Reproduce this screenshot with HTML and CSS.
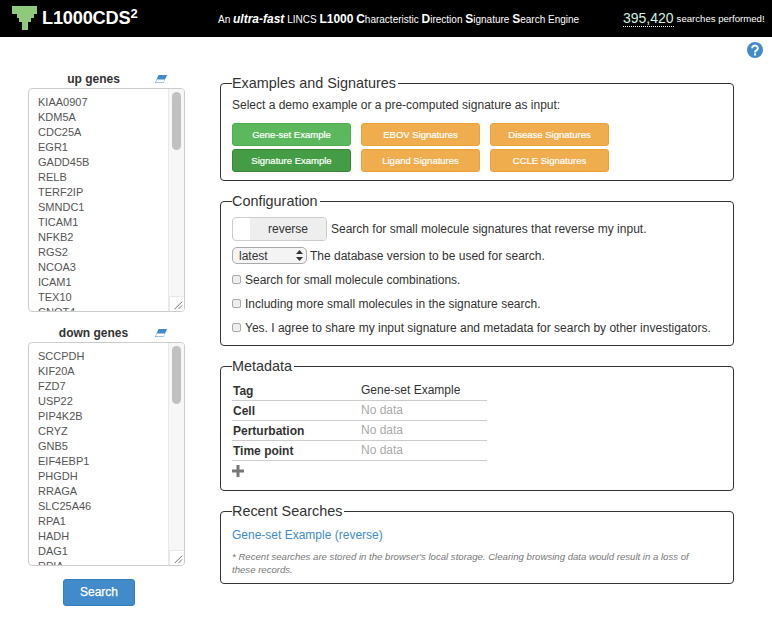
FILE: index.html
```html
<!DOCTYPE html>
<html lang="en">
<head>
<meta charset="utf-8">
<title>L1000CDS2</title>
<link rel="stylesheet" href="styles.css">
</head>
<body>
<header class="topbar">
  <svg class="logo" width="25" height="24" viewBox="0 0 25 24"><polygon points="0,0 25,0 25,8 22,8 22,12 19,12 19,16 16,16 16,24 10,24 10,16 7,16 7,12 5,12 5,8 0,8" fill="#8fc97c"/></svg>
  <div class="brand">L1000CDS<sup class="brand-sup">2</sup></div>
  <div class="tagline">An <b class="fast">ultra-fast</b> LINCS <b class="cap">L1000</b> <b class="cap">C</b>haracteristic <b class="cap">D</b>irection <b class="cap">S</b>ignature <b class="cap">S</b>earch Engine</div>
  <div class="counter"><span class="count">395,420</span> <span class="count-label">searches performed!</span></div>
</header>
<div class="helpbar">
  <svg width="16" height="16" viewBox="0 0 16 16"><circle cx="8" cy="8" r="8" fill="#428bca"/><path d="M5.200 6.200a2.800 2.600 0 1 1 4.300 2.200c-1 .6-1.500 1-1.500 2" fill="none" stroke="#fff" stroke-width="2"/><rect x="7" y="11.400" width="2.100" height="2.100" fill="#fff"/></svg>
</div>
<main class="layout">
  <aside class="genes">
    <div class="gene-head">
      <span class="gene-title">up genes</span>
      <svg class="eraser" width="12" height="8" viewBox="0 0 12 8"><path d="M3.500 0H12L8.500 8H0Z" fill="#428bca"/><path d="M1.800 4.600H9.900L8.500 7.400H.8Z" fill="#fff"/></svg>
    </div>
    <div class="gene-box">
      <div class="gene-list">KIAA0907<br>KDM5A<br>CDC25A<br>EGR1<br>GADD45B<br>RELB<br>TERF2IP<br>SMNDC1<br>TICAM1<br>NFKB2<br>RGS2<br>NCOA3<br>ICAM1<br>TEX10<br>CNOT4</div>
      <div class="scroll"><div class="thumb"></div></div>
      <svg class="grip" width="15" height="15" viewBox="0 0 15 15"><path d="M5 13 13 5M9 13l4-4" stroke="#666" fill="none"/></svg>
    </div>
    <div class="gene-head gene-head-down">
      <span class="gene-title">down genes</span>
      <svg class="eraser" width="12" height="8" viewBox="0 0 12 8"><path d="M3.500 0H12L8.500 8H0Z" fill="#428bca"/><path d="M1.800 4.600H9.900L8.500 7.400H.8Z" fill="#fff"/></svg>
    </div>
    <div class="gene-box">
      <div class="gene-list">SCCPDH<br>KIF20A<br>FZD7<br>USP22<br>PIP4K2B<br>CRYZ<br>GNB5<br>EIF4EBP1<br>PHGDH<br>RRAGA<br>SLC25A46<br>RPA1<br>HADH<br>DAG1<br>RPIA</div>
      <div class="scroll"><div class="thumb"></div></div>
      <svg class="grip" width="15" height="15" viewBox="0 0 15 15"><path d="M5 13 13 5M9 13l4-4" stroke="#666" fill="none"/></svg>
    </div>
    <button class="search-btn">Search</button>
  </aside>
  <section class="panels">
    <fieldset class="panel panel-examples">
      <legend>Examples and Signatures</legend>
      <p class="intro">Select a demo example or a pre-computed signature as input:</p>
      <div class="btn-grid">
        <button class="btn btn-green">Gene-set Example</button>
        <button class="btn btn-orange">EBOV Signatures</button>
        <button class="btn btn-orange">Disease Signatures</button>
        <button class="btn btn-green-dark">Signature Example</button>
        <button class="btn btn-orange">Ligand Signatures</button>
        <button class="btn btn-orange">CCLE Signatures</button>
      </div>
    </fieldset>
    <fieldset class="panel panel-config">
      <legend>Configuration</legend>
      <div class="row row-toggle">
        <div class="toggle"><span class="toggle-off"></span><span class="toggle-on">reverse</span></div>
        <span>Search for small molecule signatures that reverse my input.</span>
      </div>
      <div class="row row-select">
        <div class="select"><span>latest</span><svg width="7" height="11" viewBox="0 0 7 11"><path d="M3.500 0 7 4H0ZM3.500 11 0 7H7Z" fill="#333"/></svg></div>
        <span>The database version to be used for search.</span>
      </div>
      <label class="row row-check"><span class="check"></span>Search for small molecule combinations.</label>
      <label class="row row-check"><span class="check"></span>Including more small molecules in the signature search.</label>
      <label class="row row-check"><span class="check"></span>Yes. I agree to share my input signature and metadata for search by other investigators.</label>
    </fieldset>
    <fieldset class="panel panel-meta">
      <legend>Metadata</legend>
      <div class="meta-table">
        <div class="meta-row"><b>Tag</b><span class="value">Gene-set Example</span></div>
        <div class="meta-row"><b>Cell</b><span class="value muted">No data</span></div>
        <div class="meta-row"><b>Perturbation</b><span class="value muted">No data</span></div>
        <div class="meta-row"><b>Time point</b><span class="value muted">No data</span></div>
      </div>
      <svg class="plus" width="12" height="12" viewBox="0 0 12 12"><path d="M4.500 0h3v4.500h4.500v3H7.500V12h-3V7.500H0v-3h4.500Z" fill="#777"/></svg>
    </fieldset>
    <fieldset class="panel panel-recent">
      <legend>Recent Searches</legend>
      <a class="recent-link" href="#">Gene-set Example (reverse)</a>
      <p class="note">* Recent searches are stored in the browser's local storage. Clearing browsing data would result in a loss of these records.</p>
    </fieldset>
  </section>
</main>
</body>
</html>
```
FILE: styles.css
```css
* { box-sizing: border-box; }
html, body { margin: 0; padding: 0; }
body { width: 772px; height: 626px; overflow: hidden; background: #fff; color: #333; font-family: "Liberation Sans", Arial, sans-serif; font-size: 12px; }

.topbar { height: 37px; background: #000; color: #fff; display: flex; align-items: center; position: relative; padding-left: 12px; }
.logo { flex: none; margin-bottom: 1px; }
.brand { margin-left: 5px; width: 143px; font-size: 18.200px; font-weight: bold; letter-spacing: -.2px; line-height: 37px; flex: none; }
.brand-sup { font-size: 13px; line-height: 0; vertical-align: 6px; letter-spacing: 0; }
.tagline { margin-left: 33px; width: 405px; flex: none; font-size: 10px; white-space: nowrap; }
.fast { font-style: italic; font-size: 12px; }
.cap { font-size: 12px; }
.counter { white-space: nowrap; display: flex; align-items: center; gap: 3px; }
.count { font-size: 14px; color: #d5f0e3; border-bottom: 1px dotted #fff; line-height: 15px; }
.count-label { font-size: 9.600px; }

.helpbar { height: 23px; padding: 5px 9px 0 0; display: flex; justify-content: flex-end; }

.layout { display: flex; padding: 0 38px 0 28px; gap: 35px; }
.genes { width: 157px; flex: none; display: flex; flex-direction: column; margin-top: 10px; }
.gene-head { height: 18px; padding: 0 26px 1px 0; position: relative; display: flex; justify-content: center; align-items: center; }
.gene-head-down { margin-top: 12px; }
.gene-title { font-weight: bold; font-size: 12px; }
.eraser { position: absolute; right: 18px; top: 5px; }
.gene-box { height: 224px; border: 1px solid #ccc; border-radius: 4px; display: flex; position: relative; overflow: hidden; }
.gene-list { flex: 1; height: 222px; font-size: 11px; line-height: 15px; padding: 6px 9px; color: #555; white-space: nowrap; overflow: hidden; }
.scroll { width: 16px; background: #f7f7f7; border-left: 1px solid #e8e8e8; padding: 3px; }
.thumb { width: 9px; height: 58px; border-radius: 5px; background: #c1c1c1; }
.grip { position: absolute; right: 0; bottom: 0; background: #fff; border-left: 1px solid #e8e8e8; border-top: 1px solid #e8e8e8; }
.search-btn { align-self: flex-start; margin: 13px 0 0 35px; width: 72px; height: 27px; border: 1px solid #357ebd; border-radius: 3px; background: #428bca; color: #fff; font: 12px "Liberation Sans", Arial, sans-serif; -webkit-text-stroke: .25px #fff; padding: 0 0 2px; }

.panels { width: 514px; flex: none; display: flex; flex-direction: column; gap: 12px; margin-top: 15px; }
.panel { margin: 0; border: 1px solid #333; border-radius: 4px; padding: 0 11px; min-width: 0; }
.panel legend { padding: 0 2px 0 0; font-size: 14.400px; line-height: 17px; color: #333; }
.panel-examples { height: 106px; }
.intro { margin: 6px 0 0; line-height: 15px; }
.btn-grid { display: grid; grid-template-columns: 119px 119px 119px; grid-auto-rows: 23px; column-gap: 10px; row-gap: 3px; margin-top: 10px; }
.btn { border: 1px solid; border-radius: 3px; color: #fff; font: 9.500px "Liberation Sans", Arial, sans-serif; -webkit-text-stroke: .2px #fff; padding: 0; }
.btn-green { background: #5cb85c; border-color: #4cae4c; }
.btn-green-dark { background: #449d44; border-color: #398439; }
.btn-orange { background: #f0ad4e; border-color: #eea236; }

.panel-config { height: 153px; }
.row { display: flex; align-items: center; }
.row-toggle { margin-top: 7px; gap: 4px; }
.toggle { width: 95px; height: 24px; border: 1px solid #ccc; border-radius: 4px; display: flex; overflow: hidden; }
.toggle-off { width: 17px; }
.toggle-on { flex: 1; background: #eee; color: #333; text-align: center; line-height: 22px; }
.row-select { margin-top: 6px; gap: 3px; }
.select { width: 75px; height: 17px; border: 1px solid #aaa; border-radius: 5px; display: flex; justify-content: space-between; align-items: center; padding: 0 3px 0 6px; background: #f4f4f4; }
.row-check { margin-top: 7px; height: 17px; gap: 4px; }
.check { width: 9px; height: 9px; border: 1px solid #aaa; border-radius: 2px; background: #eee; flex: none; }

.panel-meta { height: 133px; }
.meta-table { width: 255px; margin-top: 6px; }
.meta-row { display: flex; height: 20px; padding-left: 1px; border-bottom: 1px solid #ccc; align-items: center; }
.meta-row b { width: 128px; flex: none; padding-top: 1px; }
.value { padding-bottom: 2px; }
.muted { color: #aaa; }
.plus { display: block; margin-top: 4px; }

.panel-recent { height: 81px; }
.recent-link { display: block; color: #428bca; text-decoration: none; line-height: 15px; margin-top: 8px; }
.note { margin: 7px 0 0; font-size: 9.600px; line-height: 13px; font-style: italic; color: #777; width: 470px; }
```
